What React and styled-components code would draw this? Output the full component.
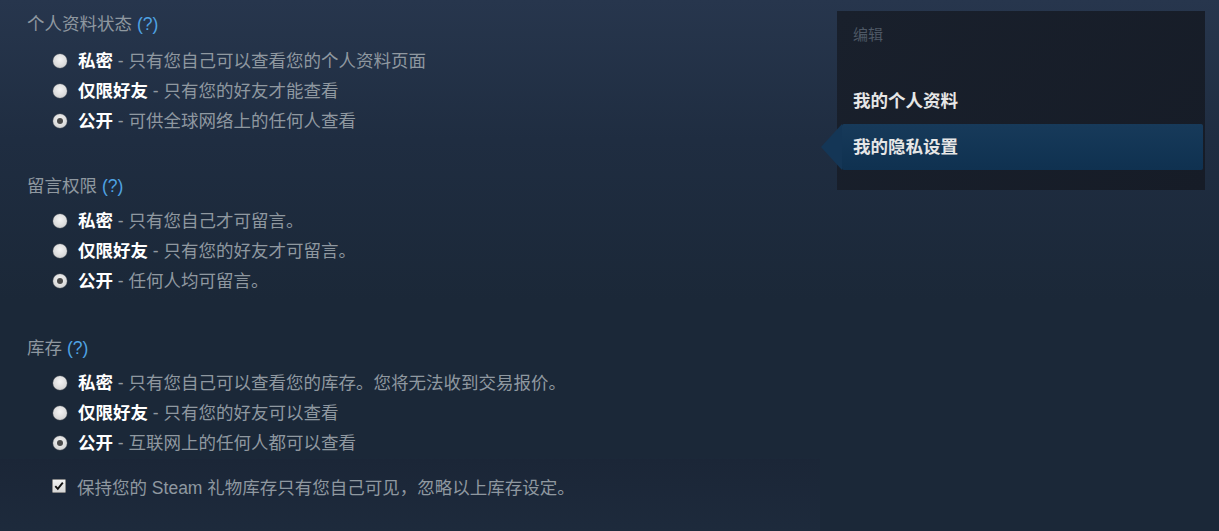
import React from 'react';
import styled, { createGlobalStyle } from 'styled-components';

const Global = createGlobalStyle`
  html, body { margin: 0; padding: 0; }
  body {
    background: #1b2838 linear-gradient(180deg, #27364d 0px, #1f2d41 140px, #1b2838 300px) no-repeat;
    min-height: 531px;
    font-family: "Liberation Sans", "Noto Sans CJK SC", sans-serif;
    overflow: hidden;
  }
`;

const Page = styled.div`
  display: flex;
  align-items: flex-start;
  width: 1219px;
`;

const LeftColumn = styled.div`
  width: 820px;
  padding-top: 12px;
  box-sizing: border-box;
`;

const Section = styled.section`
  padding-left: 27px;
  margin-bottom: ${p => (p.$last ? '0' : p.$first ? '38px' : '40px')};
`;

const Heading = styled.div`
  font-size: 17.5px;
  line-height: 24px;
  height: 24px;
  color: #8f98a0;
`;

const Help = styled.span`
  color: #4fa3e3;
`;

const RadioList = styled.div`
  padding-left: 26px;
  margin-top: ${p => (p.$first ? '10px' : '8px')};
  display: flex;
  flex-direction: column;
`;

const RadioRow = styled.label`
  display: flex;
  align-items: center;
  height: 30px;
  font-size: 17.5px;
  line-height: 20px;
  cursor: pointer;
`;

const RadioDot = styled.span`
  width: 14px;
  height: 14px;
  border-radius: 50%;
  margin-right: 11px;
  flex: none;
  box-sizing: border-box;
  background: radial-gradient(circle at 50% 40%, #f4f4f4 0%, #dcdcdc 60%, #b9b9b9 100%);
  box-shadow: 0 0 0 0.5px rgba(120, 120, 120, 0.6);
  display: flex;
  align-items: center;
  justify-content: center;
  &::after {
    content: '';
    display: ${p => (p.$checked ? 'block' : 'none')};
    width: 6px;
    height: 6px;
    border-radius: 50%;
    background: #4a4a4a;
  }
`;

const Strong = styled.span`
  color: #ffffff;
  font-weight: bold;
`;

const Desc = styled.span`
  color: #8f98a0;
  white-space: pre;
`;

const CheckPanel = styled.div`
  padding: 15px 0 60px 52px;
  background: linear-gradient(180deg, #1b2637 0px, #1e2c3e 100px);
  border-top: 1px solid rgba(0, 0, 0, 0.08);
`;

const CheckRow = styled.label`
  display: flex;
  align-items: center;
  height: 24px;
  font-size: 17.5px;
  color: #8f98a0;
`;

const CheckBox = styled.span`
  width: 14px;
  height: 14px;
  margin-right: 11px;
  flex: none;
  box-sizing: border-box;
  background: linear-gradient(180deg, #f2f2f2, #d6d6d6);
  border: 1px solid #8a8a8a;
  border-radius: 1px;
  display: flex;
  align-items: center;
  justify-content: center;
`;

const Sidebar = styled.aside`
  margin-left: 17px;
  margin-top: 11px;
  width: 368px;
  box-sizing: border-box;
  padding: 13px 2px 20px 5px;
  background: linear-gradient(135deg, #19202c 0%, #161c27 100%);
`;

const SideTitle = styled.div`
  padding-left: 11px;
  line-height: 22px;
  font-size: 15px;
  color: #4e5865;
  margin-bottom: 32px;
`;

const NavItem = styled.div`
  position: relative;
  height: 46px;
  box-sizing: border-box;
  padding: 0 0 3px 11px;
  display: flex;
  align-items: center;
  font-size: 17.5px;
  font-weight: 600;
  color: #e6e6e6;
  border-radius: 2px;
  background: ${p => (p.$active ? 'linear-gradient(180deg, #173a5a 0%, #0f3150 100%)' : 'transparent')};
  &::before {
    content: '';
    display: ${p => (p.$active ? 'block' : 'none')};
    position: absolute;
    left: -21px;
    top: 0;
    width: 0;
    height: 0;
    border-top: 23px solid transparent;
    border-bottom: 23px solid transparent;
    border-right: 21px solid #143656;
  }
`;

const sections = [
  {
    title: '个人资料状态',
    options: [
      ['私密', '只有您自己可以查看您的个人资料页面'],
      ['仅限好友', '只有您的好友才能查看'],
      ['公开', '可供全球网络上的任何人查看'],
    ],
  },
  {
    title: '留言权限',
    options: [
      ['私密', '只有您自己才可留言。'],
      ['仅限好友', '只有您的好友才可留言。'],
      ['公开', '任何人均可留言。'],
    ],
  },
  {
    title: '库存',
    options: [
      ['私密', '只有您自己可以查看您的库存。您将无法收到交易报价。'],
      ['仅限好友', '只有您的好友可以查看'],
      ['公开', '互联网上的任何人都可以查看'],
    ],
  },
];

export default function App() {
  return (
    <>
      <Global />
      <Page>
        <LeftColumn>
          {sections.map((s, i) => (
            <Section key={s.title} $first={i === 0} $last={i === sections.length - 1}>
              <Heading>
                {s.title} <Help>(?)</Help>
              </Heading>
              <RadioList $first={i === 0}>
                {s.options.map(([label, desc], j) => (
                  <RadioRow key={label}>
                    <RadioDot $checked={j === 2} />
                    <Strong>{label}</Strong>
                    <Desc>{' - ' + desc}</Desc>
                  </RadioRow>
                ))}
              </RadioList>
            </Section>
          ))}
          <CheckPanel>
            <CheckRow>
              <CheckBox>
                <svg width="10" height="10" viewBox="0 0 10 10">
                  <path d="M1.3 5.2 L3.8 7.8 L8.8 1.6" fill="none" stroke="#111" strokeWidth="1.9" />
                </svg>
              </CheckBox>
              保持您的 Steam 礼物库存只有您自己可见，忽略以上库存设定。
            </CheckRow>
          </CheckPanel>
        </LeftColumn>
        <Sidebar>
          <SideTitle>编辑</SideTitle>
          <NavItem>我的个人资料</NavItem>
          <NavItem $active>我的隐私设置</NavItem>
        </Sidebar>
      </Page>
    </>
  );
}
